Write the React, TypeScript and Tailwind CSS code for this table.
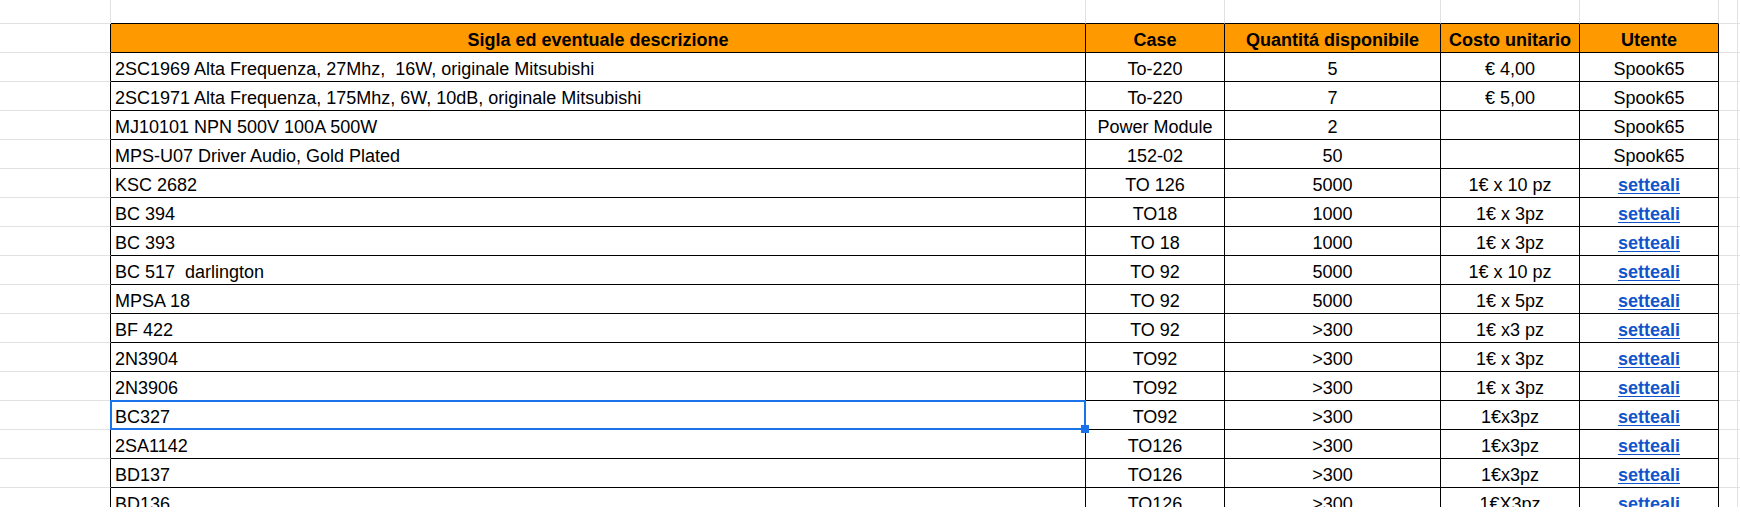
import React from "react";

type Row = [string, string, string, string, string];

const rows: Row[] = [
  ["2SC1969 Alta Frequenza, 27Mhz,  16W, originale Mitsubishi", "To-220", "5", "€ 4,00", "Spook65"],
  ["2SC1971 Alta Frequenza, 175Mhz, 6W, 10dB, originale Mitsubishi", "To-220", "7", "€ 5,00", "Spook65"],
  ["MJ10101 NPN 500V 100A 500W", "Power Module", "2", "", "Spook65"],
  ["MPS-U07 Driver Audio, Gold Plated", "152-02", "50", "", "Spook65"],
  ["KSC 2682", "TO 126", "5000", "1€ x 10 pz", "setteali"],
  ["BC 394", "TO18", "1000", "1€ x 3pz", "setteali"],
  ["BC 393", "TO 18", "1000", "1€ x 3pz", "setteali"],
  ["BC 517  darlington", "TO 92", "5000", "1€ x 10 pz", "setteali"],
  ["MPSA 18", "TO 92", "5000", "1€ x 5pz", "setteali"],
  ["BF 422", "TO 92", ">300", "1€ x3 pz", "setteali"],
  ["2N3904", "TO92", ">300", "1€ x 3pz", "setteali"],
  ["2N3906", "TO92", ">300", "1€ x 3pz", "setteali"],
  ["BC327", "TO92", ">300", "1€x3pz", "setteali"],
  ["2SA1142", "TO126", ">300", "1€x3pz", "setteali"],
  ["BD137", "TO126", ">300", "1€x3pz", "setteali"],
  ["BD136", "TO126", ">300", "1€X3pz", "setteali"],
];

const cellBase = "box-border shrink-0 border-r border-b flex items-end pb-[2px] whitespace-pre overflow-hidden";

function DataRow({ r }: { r: Row }) {
  const isLink = r[4] === "setteali";
  return (
    <div className="flex h-[29px]">
      <div className="box-border w-[111px] shrink-0 border-r border-b border-r-black border-b-[#e2e2e2]" />
      <div className={`${cellBase} w-[975px] border-black pl-[4px]`}>{r[0]}</div>
      <div className={`${cellBase} w-[139px] border-black justify-center`}>{r[1]}</div>
      <div className={`${cellBase} w-[216px] border-black justify-center`}>{r[2]}</div>
      <div className={`${cellBase} w-[139px] border-black justify-center`}>{r[3]}</div>
      <div className={`${cellBase} w-[139px] border-black justify-center`}>
        {isLink ? (
          <span className="font-bold text-[#1155cc] underline underline-offset-[2px]">{r[4]}</span>
        ) : (
          r[4]
        )}
      </div>
      <div className="box-border w-[19px] shrink-0 border-r border-b border-[#e2e2e2]" />
      <div className="box-border flex-1 border-b border-[#e2e2e2]" />
    </div>
  );
}

export default function App() {
  return (
    <div className="w-[1740px] h-[527px] bg-white overflow-hidden font-['Liberation_Sans',Arial,sans-serif] text-[18px] leading-[20px] text-black">
      <div className="relative h-[507px] overflow-hidden">
        {/* top spacer row */}
        <div className="flex h-[24px]">
          <div className="box-border w-[111px] shrink-0 border-r border-b border-[#e2e2e2]" />
          <div className="box-border w-[975px] shrink-0 border-r border-b border-r-[#e2e2e2] border-b-black" />
          <div className="box-border w-[139px] shrink-0 border-r border-b border-r-[#e2e2e2] border-b-black" />
          <div className="box-border w-[216px] shrink-0 border-r border-b border-r-[#e2e2e2] border-b-black" />
          <div className="box-border w-[139px] shrink-0 border-r border-b border-r-[#e2e2e2] border-b-black" />
          <div className="box-border w-[139px] shrink-0 border-r border-b border-r-[#e2e2e2] border-b-black" />
          <div className="box-border w-[19px] shrink-0 border-r border-b border-[#e2e2e2]" />
          <div className="box-border flex-1 border-b border-[#e2e2e2]" />
        </div>
        {/* header row */}
        <div className="flex h-[29px] font-bold">
          <div className="box-border w-[111px] shrink-0 border-r border-b border-r-black border-b-[#e2e2e2]" />
          <div className={`${cellBase} w-[975px] border-black justify-center bg-[#ff9900]`}>Sigla ed eventuale descrizione</div>
          <div className={`${cellBase} w-[139px] border-black justify-center bg-[#ff9900]`}>Case</div>
          <div className={`${cellBase} w-[216px] border-black justify-center bg-[#ff9900]`}>Quantitá disponibile</div>
          <div className={`${cellBase} w-[139px] border-black justify-center bg-[#ff9900]`}>Costo unitario</div>
          <div className={`${cellBase} w-[139px] border-black justify-center bg-[#ff9900]`}>Utente</div>
          <div className="box-border w-[19px] shrink-0 border-r border-b border-[#e2e2e2]" />
          <div className="box-border flex-1 border-b border-[#e2e2e2]" />
        </div>
        {rows.map((r, i) => (
          <DataRow key={i} r={r} />
        ))}
        {/* selection */}
        <div className="absolute left-[110px] top-[400px] w-[976px] h-[30px] border-2 border-[#1a73e8] box-border pointer-events-none" />
        <div className="absolute left-[1081px] top-[425px] w-[8px] h-[8px] bg-[#1a73e8]" />
      </div>
    </div>
  );
}
